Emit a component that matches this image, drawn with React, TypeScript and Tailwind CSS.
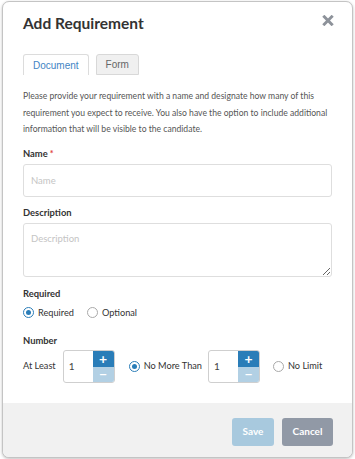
import React from "react";

function Radio({ checked, label }: { checked?: boolean; label: string }) {
  return (
    <label className="flex shrink-0 items-center gap-[4px] whitespace-nowrap text-[9.2px] leading-[14px] text-[#333]">
      <span
        className={
          checked
            ? "flex h-[11px] w-[11px] shrink-0 items-center justify-center rounded-full border-[1.5px] border-[#2a7db8] bg-white"
            : "flex h-[11px] w-[11px] shrink-0 items-center justify-center rounded-full border border-[#a9a9a9] bg-white"
        }
      >
        {checked && <span className="h-[5px] w-[5px] rounded-full bg-[#2a7db8]" />}
      </span>
      {label}
    </label>
  );
}

function Stepper() {
  return (
    <div className="flex h-[33px] w-[52px] shrink-0 overflow-hidden rounded-[3px] border border-[#cfcfcf] bg-white">
      <div className="flex flex-1 items-center pl-[5px] text-[10px] text-[#444]">1</div>
      <div className="flex w-[21px] flex-col">
        <div className="flex h-[16px] items-center justify-center bg-[#2a7db8] text-[14px] font-bold leading-none text-white">
          +
        </div>
        <div className="flex flex-1 items-center justify-center bg-[#b2d0e4] text-[14px] font-bold leading-none text-white">
          −
        </div>
      </div>
    </div>
  );
}

export default function App() {
  return (
    <div className="min-h-[459px] w-[355px] bg-white" style={{ fontFamily: "Lato, 'Noto Sans', sans-serif" }}>
      <div className="ml-[2px] mt-[1px] w-[351px] overflow-hidden rounded-[7px] border border-[#c4c4c4] bg-white shadow-[0_1px_3px_rgba(0,0,0,0.25)]">
        <div className="px-[20px] pb-[20px] pt-[10px]">
          <div className="flex items-start justify-between">
            <h1 className="text-[15.5px] font-bold leading-[22px] text-[#333]">Add Requirement</h1>
            <svg viewBox="0 0 12 12" className="mr-[-2px] mt-[3px] h-[11px] w-[12px]">
              <path d="M2 2 L10 10 M10 2 L2 10" stroke="#8d929a" strokeWidth="3.2" strokeLinecap="square" />
            </svg>
          </div>

          <div
            className="mt-[20px] flex gap-[7px] text-[10px]"
            style={{ fontFamily: "'Liberation Sans', Arial, sans-serif" }}
          >
            <div className="flex h-[21px] items-center rounded-t-[3px] border border-b-0 border-[#dcdcdc] bg-white px-[9px] text-[#3f84c4]">
              Document
            </div>
            <div className="flex h-[21px] items-center rounded-t-[3px] border border-[#d8d8d8] bg-[#f0f0f0] px-[9px] text-[#666]">
              Form
            </div>
          </div>

          <p className="mt-[13px] text-[8.6px] leading-[16.5px] text-[#555]">
            Please provide your requirement with a name and designate how many of this requirement you expect to
            receive. You also have the option to include additional information that will be visible to the candidate.
          </p>

          <div className="mt-[9px] text-[9.4px] font-bold leading-[14px] text-[#333]">
            Name<span className="ml-[2px] align-top text-[9px] text-[#e04040]">*</span>
          </div>
          <input
            className="mt-[3px] h-[33px] w-full rounded-[3px] border border-[#dedede] px-[7px] text-[9.5px] text-[#333] placeholder:text-[#c4c4c4] focus:outline-none"
            placeholder="Name"
          />

          <div className="mt-[9px] text-[9.4px] font-bold leading-[14px] text-[#333]">Description</div>
          <textarea
            className="mt-[3px] block h-[54px] w-full rounded-[3px] border border-[#dedede] px-[7px] py-[8px] text-[9.5px] text-[#333] placeholder:text-[#c4c4c4] focus:outline-none"
            placeholder="Description"
          />

          <div className="mt-[10px] text-[9.4px] font-bold leading-[14px] text-[#333]">Required</div>
          <div className="mt-[5px] flex gap-[13px]">
            <Radio checked label="Required" />
            <Radio label="Optional" />
          </div>

          <div className="mt-[14px] text-[9.4px] font-bold leading-[14px] text-[#333]">Number</div>
          <div className="mt-[2px] flex items-center whitespace-nowrap">
            <span className="mr-[7px] shrink-0 text-[9.2px] text-[#333]">At Least</span>
            <Stepper />
            <div className="ml-[14px] mr-[6px] shrink-0">
              <Radio checked label="No More Than" />
            </div>
            <Stepper />
            <div className="ml-[13px] shrink-0">
              <Radio label="No Limit" />
            </div>
          </div>
        </div>

        <div className="flex justify-end gap-[8px] bg-[#f1f1f1] px-[19px] pb-[11px] pt-[15px]">
          <button className="h-[28px] w-[42px] rounded-[3px] bg-[#a8c9de] text-[10px] font-bold text-white">
            Save
          </button>
          <button className="h-[28px] w-[51px] rounded-[3px] bg-[#9199a6] text-[10px] font-bold text-white">
            Cancel
          </button>
        </div>
      </div>
    </div>
  );
}
